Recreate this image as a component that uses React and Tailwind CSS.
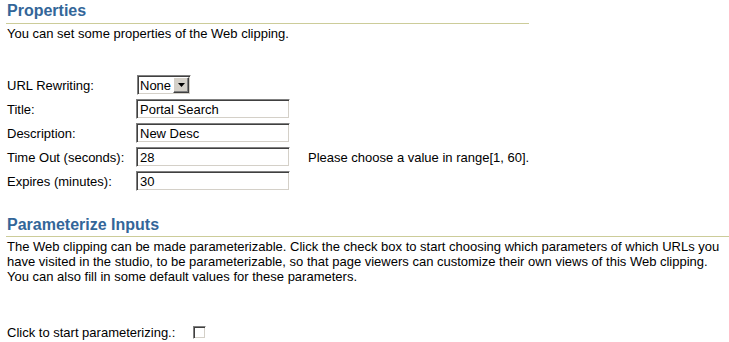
import React from 'react';

const inset = "border border-t-[#808080] border-l-[#808080] border-r-white border-b-white shadow-[inset_1px_1px_0_#404040,inset_-1px_-1px_0_#d4d0c8]";

function Field({ label, value, note }) {
    return (
        <div className="flex items-center h-[24px]">
            <span className="w-[130px] pl-[1px]">{label}</span>
            <input
                type="text"
                defaultValue={value}
                className={`w-[154px] h-[20px] px-[3px] bg-white text-[13px] text-black outline-none ${inset}`}
            />
            {note && <span className="ml-[18px]">{note}</span>}
        </div>
    );
}

export default function App() {
    return (
        <div className="w-[729px] h-[342px] overflow-hidden bg-white text-black text-[13px] leading-[15px] pl-[6px] font-['Liberation_Sans',Arial,sans-serif]">
            {/* properties */}
            <div className="w-[523px]">
                <h2 className="text-[16px] leading-[20px] font-bold text-[#336699] pt-[1px] pb-[2px] pl-[1px] border-b border-[#cccc99]">Properties</h2>
                <p className="mt-[2px] pl-[1px]">You can set some properties of the Web clipping.</p>
            </div>

            <div className="mt-[32px]">
                <div className="flex items-center h-[24px]">
                    <span className="w-[131px] pl-[1px]">URL Rewriting:</span>
                    <div className={`flex items-center w-[54px] h-[20px] bg-white ${inset}`}>
                        <span className="flex-1 pl-[2px]">None</span>
                        <span className="flex items-center justify-center w-[16px] h-[16px] mr-[1px] bg-[#d4d0c8] border border-t-white border-l-white border-r-[#404040] border-b-[#404040] shadow-[inset_-1px_-1px_0_#808080]">
                            <svg width="7" height="4" viewBox="0 0 7 4"><path d="M0 0h7L3.5 4z" fill="#000" /></svg>
                        </span>
                    </div>
                </div>
                <Field label="Title:" value="Portal Search" />
                <Field label="Description:" value="New Desc" />
                <Field label="Time Out (seconds):" value="28" note="Please choose a value in range[1, 60]." />
                <Field label="Expires (minutes):" value="30" />
            </div>

            {/* parameterize */}
            <h2 className="mt-[22px] text-[16px] leading-[20px] font-bold text-[#336699] pl-[1px] pb-[1px] border-b border-[#cccc99]">Parameterize Inputs</h2>
            <p className="mt-[2px] pl-[1px] whitespace-nowrap">
                The Web clipping can be made parameterizable. Click the check box to start choosing which parameters of which URLs you<br />
                have visited in the studio, to be parameterizable, so that page viewers can customize their own views of this Web clipping.<br />
                You can also fill in some default values for these parameters.
            </p>

            <div className="flex items-center mt-[41px] h-[15px]">
                <span className="w-[187px] pl-[1px]">Click to start parameterizing.:</span>
                <input type="checkbox" className={`appearance-none w-[13px] h-[13px] bg-white ${inset}`} />
            </div>
        </div>
    );
}
